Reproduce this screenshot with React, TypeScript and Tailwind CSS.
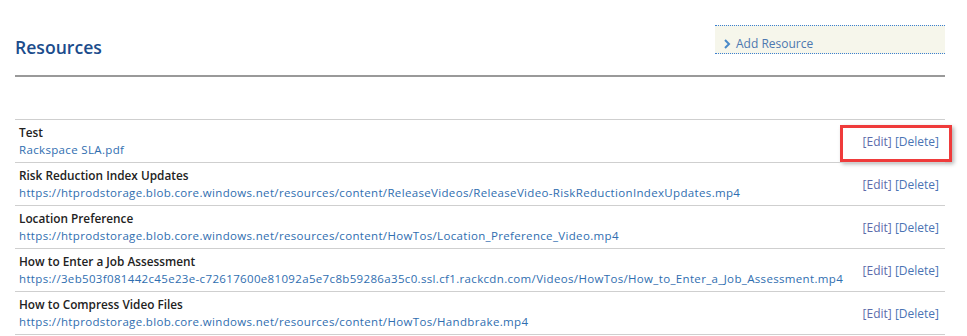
import React from "react";

interface Resource {
  title: string;
  url: string;
}

const resources: Resource[] = [
  { title: "Test", url: "Rackspace SLA.pdf" },
  {
    title: "Risk Reduction Index Updates",
    url: "https://htprodstorage.blob.core.windows.net/resources/content/ReleaseVideos/ReleaseVideo-RiskReductionIndexUpdates.mp4",
  },
  {
    title: "Location Preference",
    url: "https://htprodstorage.blob.core.windows.net/resources/content/HowTos/Location_Preference_Video.mp4",
  },
  {
    title: "How to Enter a Job Assessment",
    url: "https://3eb503f081442c45e23e-c72617600e81092a5e7c8b59286a35c0.ssl.cf1.rackcdn.com/Videos/HowTos/How_to_Enter_a_Job_Assessment.mp4",
  },
  {
    title: "How to Compress Video Files",
    url: "https://htprodstorage.blob.core.windows.net/resources/content/HowTos/Handbrake.mp4",
  },
];

const ResourceRow: React.FC<{ item: Resource; highlight?: boolean }> = ({ item, highlight }) => (
  <div className="relative flex items-center border-t border-[#cfcfcf] h-[43px] pl-1 pr-[6px]">
    <div className="flex flex-col">
      <span className="text-[11.8px] leading-[17px] font-semibold text-[#222]">{item.title}</span>
      <a className="text-[11.5px] leading-[18px] tracking-[0.34px] text-[#2f6eb0]">{item.url}</a>
    </div>
    <div className="ml-auto text-[12px] leading-[17px] whitespace-nowrap">
      <a className="text-[#5d6cab]">[Edit]</a> <a className="text-[#4a74b4]">[Delete]</a>
    </div>
    {highlight && (
      <div className="absolute left-[825px] top-[5px] w-[112px] h-[37px] border-[3px] border-[#ef3b3b] shadow-[2px_2px_4px_rgba(0,0,0,0.3)]" />
    )}
  </div>
);

export default function App() {
  return (
    <div className="w-[967px] h-[336px] bg-white pl-[15px] pr-[22px] font-['Open_Sans',sans-serif] overflow-hidden">
      <div className="flex items-start pt-[25px] h-[77px] border-b-2 border-[#999]">
        <h1 className="text-[17.6px] leading-[24px] font-semibold text-[#1b4c8c] mt-[10px]">Resources</h1>
        <div className="ml-auto w-[230px] h-[29px] flex items-start bg-[#f6f6eb] border-y border-dotted border-[#3b7fd0] pl-2 pt-[9px]">
          <svg width="8" height="10" viewBox="0 0 8 10" className="mr-[5px] mt-[4px]">
            <path d="M2 1 L6 5 L2 9" fill="none" stroke="#4a8ac9" strokeWidth="2" />
          </svg>
          <span className="text-[12px] leading-[18px] text-[#4d78b0]">Add Resource</span>
        </div>
      </div>
      <div className="mt-[42px] border-b border-[#cfcfcf]">
        {resources.map((r, i) => (
          <ResourceRow key={i} item={r} highlight={i === 0} />
        ))}
      </div>
    </div>
  );
}
